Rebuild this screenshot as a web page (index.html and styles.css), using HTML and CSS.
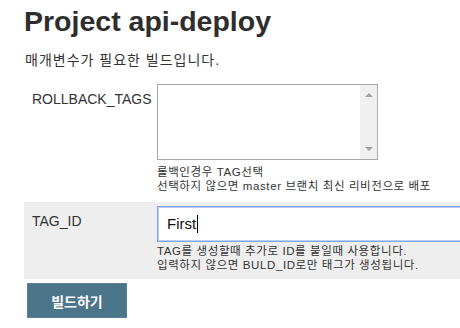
FILE: index.html
```html
<!DOCTYPE html>
<html lang="ko">
<head>
<meta charset="utf-8">
<title>Project api-deploy</title>
<link rel="stylesheet" href="styles.css">
</head>
<body>
<div class="page">
  <h1 class="title">Project api-deploy</h1>
  <p class="subtitle">매개변수가 필요한 빌드입니다.</p>
  <div class="form">
    <div class="row">
      <div class="label">ROLLBACK_TAGS</div>
      <div class="field">
        <div class="textarea">
          <div class="scrollbar">
            <span class="arrow up"></span>
            <span class="arrow down"></span>
          </div>
        </div>
        <div class="help">
          <div>롤백인경우 TAG선택</div>
          <div>선택하지 않으면 master 브랜치 최신 리비전으로 배포</div>
        </div>
      </div>
    </div>
    <div class="row row-alt">
      <div class="label">TAG_ID</div>
      <div class="field">
        <div class="input">First<span class="caret"></span></div>
        <div class="help">
          <div>TAG를 생성할때 추가로 ID를 붙일때 사용합니다.</div>
          <div>입력하지 않으면 BULD_ID로만 태그가 생성됩니다.</div>
        </div>
      </div>
    </div>
  </div>
  <button class="build-btn" type="button">빌드하기</button>
</div>
</body>
</html>
```

FILE: styles.css
```css
html, body {
  margin: 0;
  padding: 0;
  overflow: hidden;
  background: #fff;
}
body {
  font-family: "Liberation Sans", "Noto Sans CJK KR", sans-serif;
  color: #333;
}
.page {
  padding-left: 24px;
}
.title {
  margin: 5px 0 0 0;
  font-size: 28.5px;
  line-height: 32px;
  font-weight: bold;
  color: #2e2e2e;
}
.subtitle {
  margin: 13px 0 0 1px;
  font-size: 14px;
  line-height: 20px;
  letter-spacing: 1px;
}
.form {
  width: 436px;
  margin-top: 10px;
}
.row {
  display: flex;
  padding: 4px 0 9px 0;
  overflow: hidden;
}
.row-alt {
  background: #eeeeee;
  padding-bottom: 7px;
}
.label {
  width: 125px;
  flex: none;
  padding: 7px 0 0 8px;
  font-size: 14px;
  line-height: 16px;
  color: #333;
}
.field {
  flex: 1;
  min-width: 0;
}
.textarea {
  width: 219px;
  height: 74px;
  border: 1px solid #a9a9a9;
  background: #fff;
  display: flex;
  justify-content: flex-end;
  margin-bottom: 5px;
}
.scrollbar {
  width: 17px;
  background: #f0f0f0;
  position: relative;
}
.arrow {
  position: absolute;
  left: 5px;
  width: 0;
  height: 0;
  border-left: 4px solid transparent;
  border-right: 4px solid transparent;
}
.arrow.up {
  top: 8px;
  border-bottom: 4px solid #a3a3a3;
}
.arrow.down {
  bottom: 8px;
  border-top: 4px solid #a3a3a3;
}
.input {
  width: 320px;
  height: 34px;
  border: 1px solid #7ea6e8;
  box-shadow: inset 0 0 0 1px #b9d0f4;
  background: #fff;
  font-size: 15px;
  line-height: 34px;
  padding-left: 9px;
  color: #111;
  display: flex;
  align-items: center;
}
.caret {
  display: inline-block;
  width: 1px;
  height: 18px;
  background: #000;
  margin-left: 1px;
}
.help {
  margin-top: 2px;
  font-size: 11.5px;
  line-height: 14px;
  letter-spacing: 0.6px;
  color: #333;
}
.build-btn {
  display: block;
  margin: 4px 0 0 3px;
  width: 100px;
  height: 35px;
  border: 1px solid #5a8396;
  background: #4b7589;
  color: #fff;
  font-family: "Liberation Sans", "Noto Sans CJK KR", sans-serif;
  font-size: 14px;
  font-weight: bold;
  padding: 0;
}
```
